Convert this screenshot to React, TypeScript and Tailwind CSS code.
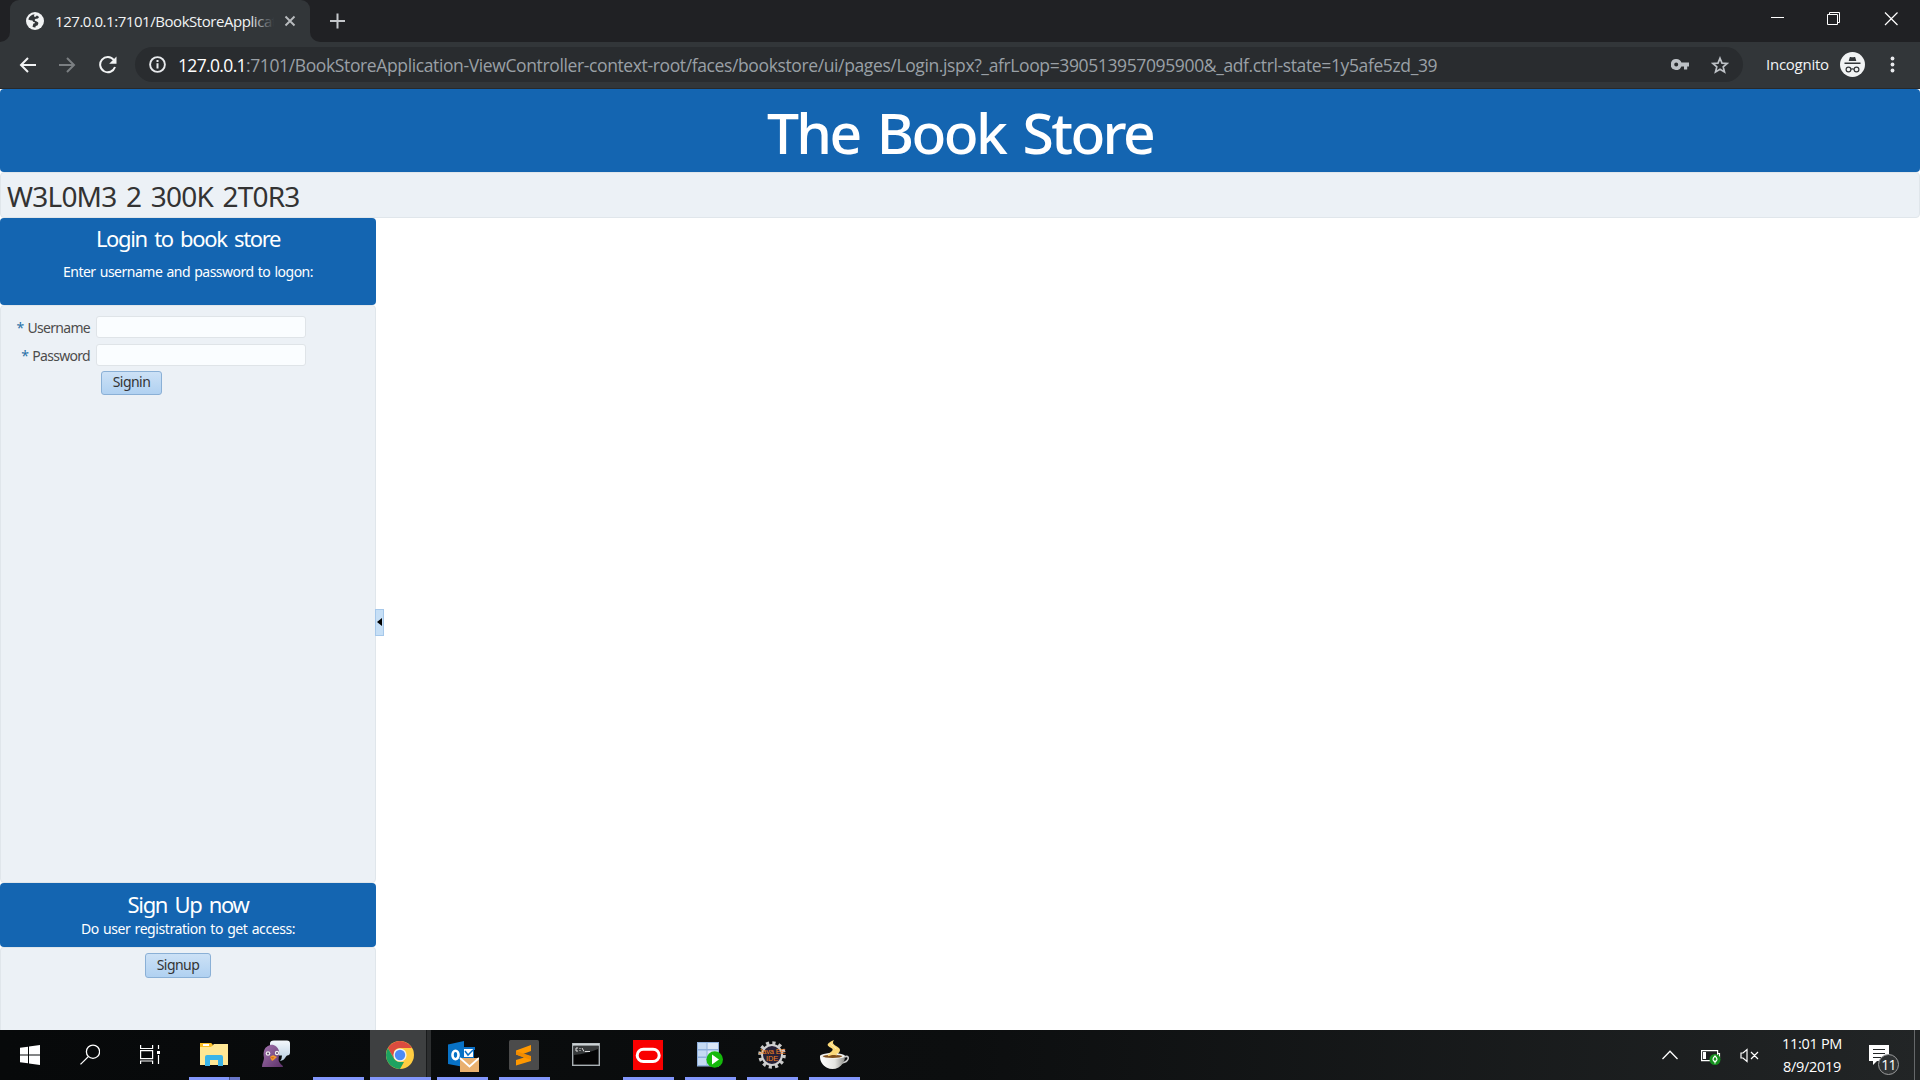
import type { ReactNode } from "react";

/* ---------- Browser chrome ---------- */

function GlobeIcon() {
  return (
    <svg width="18" height="18" viewBox="0 0 18 18">
      <circle cx="9" cy="9" r="9" fill="#f1f3f4" />
      <path
        d="M8.600 2.200C5.400 2.400 3 4.700 2.300 7.500c1.500.6 2.700 1 4.200 1 .4 1 .7 1.500 2.300 1.700.5.900-.4 1.300-1.400 1.400L6.500 14.800c.8.600 1.800.9 3 .8-.3-1.300.7-1.900 1.900-2 .6-1.300 1.500-2.200.6-3.300C10.900 9 9.500 9.500 8.700 8.200c-.2-1 .8-1.600 2.400-1.500.8-.2 1.300-.6 1.900-1.500-.6-.9-1.200-1.200-2.200-1.700-.7.600-.8 1.200-1.700 1.300-1 0-1.500-.9-.5-2.600z"
        fill="#323639"
      />
    </svg>
  );
}

function TabStrip() {
  return (
    <div className="flex h-[42px] bg-[#202124]">
      <div className="flex w-[10px] items-end bg-[#323639]">
        <div className="h-[42px] w-full rounded-br-[10px] bg-[#202124]" />
      </div>
      <div className="flex w-[300px] shrink-0 bg-[#202124]">
        <div className="flex h-[42px] w-full items-center rounded-t-[9px] bg-[#323639] pl-4">
          <GlobeIcon />
          <div className="relative ml-[11px] w-[219px] overflow-hidden whitespace-nowrap text-[15px] leading-[20px] tracking-[-0.45px] text-[#f1f3f4]">
            127.0.0.1:7101/BookStoreApplicat
            <div className="absolute right-0 top-0 h-5 w-6 bg-linear-to-r from-transparent to-[#323639]" />
          </div>
          <svg className="ml-[10px]" width="12" height="12" viewBox="0 0 12 12">
            <path d="M1.500 1.500l9 9M10.500 1.500l-9 9" stroke="#b8bbbe" strokeWidth="1.900" />
          </svg>
        </div>
      </div>
      <div className="w-[10px] bg-[#323639]">
        <div className="h-[42px] w-full rounded-bl-[10px] bg-[#202124]" />
      </div>
      <svg className="ml-[10px] mt-[13px]" width="16" height="16" viewBox="0 0 16 16">
        <path d="M7.500 .5v15M0 8h15" stroke="#c4c7ca" strokeWidth="2" />
      </svg>
      <div className="ml-auto flex">
        <svg className="mt-[11px]" width="150" height="16" viewBox="1770 11 150 16" fill="none" stroke="#fff">
          <path d="M1771 17.500h13" />
          <path d="M1827.500 14.500h10v10h-10zM1829.500 14.500v-2h10v10h-2" />
          <path d="M1885 12.500l12.500 12.500M1897.500 12.500L1885 25" strokeWidth="1.200" />
        </svg>
      </div>
    </div>
  );
}

function Toolbar() {
  return (
    <div className="flex h-[47px] items-center border-b border-[#27292b] bg-[#323639] pb-px">
      <svg className="ml-[19px]" width="17" height="16" viewBox="0 0 17 16" fill="none" stroke="#f1f3f4" strokeWidth="2">
        <path d="M17 8H2M9 1L2 8l7 7" />
      </svg>
      <svg className="ml-[23px]" width="17" height="16" viewBox="0 0 17 16" fill="none" stroke="#7b7f82" strokeWidth="2">
        <path d="M0 8h15M8 1l7 7-7 7" />
      </svg>
      <svg className="ml-[23px]" width="18" height="18" viewBox="0 0 18 18">
        <path d="M14.800 4A7.600 7.600 0 1 0 16 11" fill="none" stroke="#f1f3f4" strokeWidth="2" />
        <path d="M17.500 .5v7.300h-7.300z" fill="#f1f3f4" />
      </svg>
      <div className="ml-[18px] flex h-[35px] w-[1608px] items-center rounded-full bg-[#292c2f] pl-[14px]">
        <svg width="17" height="17" viewBox="0 0 17 17">
          <circle cx="8.500" cy="8.500" r="7.400" fill="none" stroke="#e8eaed" strokeWidth="1.900" />
          <path d="M8.500 7.300v5.200M8.500 4v2" stroke="#e8eaed" strokeWidth="2" />
        </svg>
        <span className="ml-3 whitespace-nowrap text-[17.500px] leading-6 tracking-[-0.376px] text-[#9aa0a6]">
          <span className="tracking-[-0.65px] text-white">127.0.0.1</span>
          :7101/BookStoreApplication-ViewController-context-root/faces/bookstore/ui/pages/Login.jspx?_afrLoop=390513957095900&amp;_adf.ctrl-state=1y5afe5zd_39
        </span>
        <svg className="ml-auto" width="18" height="11" viewBox="0 0 18 11">
          <path
            fillRule="evenodd"
            d="M5.500 0a5.500 5.500 0 1 0 4.900 7.500H13V10.500h3.200V7.500H18V3.600H10.400A5.500 5.500 0 0 0 5.500 0zM5.200 3.400a2 2 0 1 1 0 4 2 2 0 0 1 0-4z"
            fill="#bdc1c6"
          />
        </svg>
        <svg className="ml-[22px] mr-[14px]" width="18" height="18" viewBox="0 0 18 18">
          <path
            d="M9 2.200l2 4.900 5.200.4-4 3.400 1.300 5.100L9 13.300 4.500 16l1.300-5.100-4-3.400 5.200-.4z"
            fill="none"
            stroke="#bdc1c6"
            strokeWidth="1.700"
          />
        </svg>
      </div>
      <span className="ml-[23px] w-[63px] whitespace-nowrap text-[15px] tracking-[-0.25px] text-[#f1f3f4]">Incognito</span>
      <svg className="ml-[11px]" width="25" height="25" viewBox="0 0 25 25">
        <circle cx="12.500" cy="12.500" r="12.500" fill="#f1f3f4" />
        <path d="M8.700 9l1-3.600c.2-.5.600-.5 1-.4 1.200.4 2.400.4 3.600 0 .4-.1.800-.1 1 .4l1 3.600zM4.500 10.600h16v1.300h-16z" fill="#323639" />
        <g fill="none" stroke="#323639" strokeWidth="1.200">
          <circle cx="8.500" cy="17.500" r="2.400" />
          <circle cx="16.500" cy="17.500" r="2.400" />
          <path d="M10.900 17.300q1.600-1 3.200 0" />
        </g>
      </svg>
      <svg className="ml-[25px]" width="5" height="17" viewBox="0 0 5 17" fill="#e8eaed">
        <circle cx="2.500" cy="2.500" r="1.900" />
        <circle cx="2.500" cy="8.500" r="1.900" />
        <circle cx="2.500" cy="14.500" r="1.900" />
      </svg>
    </div>
  );
}

/* ---------- Book store page ---------- */

function Field({ label, type }: { label: string; type: string }) {
  return (
    <label className="flex h-[28px] items-start">
      <span className="mr-[6px] w-[89px] whitespace-nowrap pt-[2px] text-right text-[14px] leading-5 tracking-[-0.7px] text-[#4c4c4c]">
        <span className="mr-1 text-[#2a72a8]">*</span>
        {label}
      </span>
      <input type={type} className="h-[22px] w-[210px] rounded-[3px] border border-[#dfe4e8] bg-[#fafdff] px-1 outline-none" />
    </label>
  );
}

const buttonClass =
  "block whitespace-nowrap rounded-[3px] border border-[#8ab0d6] bg-linear-to-b from-[#cce1f6] to-[#b0d1f1] pb-[2px] text-center text-[14px] leading-[20px] tracking-[-0.55px] text-[#333]";

const headingClass = "text-[22px] leading-[30px] tracking-[-1.35px] [word-spacing:3px]";

function Sidebar() {
  return (
    <aside className="flex w-[376px] shrink-0 flex-col bg-white">
      <div className="h-[87px] rounded-[4px] bg-[#1465b1] text-center text-white">
        <h2 className={`${headingClass} pt-[5px]`}>Login to book store</h2>
        <p className="pt-[9px] text-[14px] leading-5 tracking-[-0.5px] [word-spacing:1px]">
          Enter username and password to logon:
        </p>
      </div>
      <div className="h-[578px] rounded-[4px] border border-[#e0e6eb] bg-[#ecf1f6] pt-[10px]">
        <Field label="Username" type="text" />
        <Field label="Password" type="password" />
        <button className={`${buttonClass} ml-[100px] -mt-px h-[24px] w-[61px]`}>Signin</button>
      </div>
      <div className="h-[64px] rounded-[4px] bg-[#1465b1] text-center text-white">
        <h2 className={`${headingClass} pt-[6px]`}>Sign Up now</h2>
        <p className="pt-px text-[14px] leading-[18px] tracking-[-0.42px] [word-spacing:1px]">
          Do user registration to get access:
        </p>
      </div>
      <div className="flex-1 rounded-t-[4px] border border-b-0 border-[#e0e6eb] bg-[#ecf1f6] pt-[5px]">
        <button className={`${buttonClass} ml-[144px] h-[25px] w-[66px]`}>Signup</button>
      </div>
    </aside>
  );
}

function StorePage() {
  return (
    <main className="flex min-h-0 flex-1 flex-col bg-white font-['Noto_Sans',sans-serif]">
      <header className="h-[83px] rounded-[4px] bg-[#1465b1] text-center">
        <h1 className="pt-[3px] text-[57px] font-medium leading-[80px] tracking-[-2.6px] text-white [word-spacing:5px]">
          The Book Store
        </h1>
      </header>
      <div className="h-[46px] rounded-[4px] border border-[#e0e6eb] bg-[#ecf1f6] pl-[6px] text-[28px] leading-[46px] tracking-[-0.78px] text-[#333] [word-spacing:3px]">
        W3L0M3 2 300K 2T0R3
      </div>
      <div className="flex min-h-0 flex-1">
        <Sidebar />
        <div className="relative flex-1 bg-white">
          <button className="absolute -left-px top-[391px] flex h-[27px] w-[9px] items-center justify-start border border-[#a6c8ea] bg-[#c6dff6] pb-px">
            <svg width="6" height="8" viewBox="0 0 6 8">
              <path d="M6 0v8L1 4z" fill="#000" />
            </svg>
          </button>
        </div>
      </div>
    </main>
  );
}

/* ---------- Taskbar ---------- */

function Task({ children, running = true }: { children?: ReactNode; running?: boolean }) {
  return (
    <div className="flex w-[62px] flex-col pl-[5px]">
      <div className="flex h-[47px] w-[50px] items-start justify-center pt-[10px]">{children}</div>
      {running && <div className="h-[3px] w-[51px] bg-[#8296fb]" />}
    </div>
  );
}

function FolderIcon() {
  return (
    <svg width="30" height="30" viewBox="0 0 30 30">
      <path d="M1 4q0-1 1-1h10l2 3v2H1z" fill="#f8b921" />
      <path d="M1 6h12l2-2h14v21H1z" fill="#ffe794" />
      <path d="M1 3h11l2 2-2 2H1z" fill="#fbbf25" />
      <path d="M4 4h6v2H4z" fill="#fff" />
      <path d="M6 26V17q0-2 2-2h14q2 0 2 2v9h-5v-6h-8v6z" fill="#3bb4e8" />
    </svg>
  );
}

function PidginIcon() {
  return (
    <svg width="30" height="30" viewBox="0 0 30 30">
      <defs>
        <linearGradient id="bubble" x2="0" y2="1">
          <stop stopColor="#f4f8fd" />
          <stop offset="1" stopColor="#b9cfe3" />
        </linearGradient>
        <linearGradient id="bird" x2="1" y2="1">
          <stop stopColor="#a273ae" />
          <stop offset="1" stopColor="#5d3269" />
        </linearGradient>
      </defs>
      <path d="M13 .5h13q3 0 3 3v9q0 3-3 3l-1 1q-2 4-6 4.500 2-2 2-5.500H9v-12q0-3 4-3z" fill="url(#bubble)" />
      <path d="M9 5c4-1 8 2 9 6 1 5-2 9 1 12 1 2 3 2 3 4H1c0-4 2-6 2-9 0-2-1-3 0-7 1-4 4-5 6-6z" fill="url(#bird)" />
      <circle cx="7" cy="13.500" r="2.300" fill="#eee" />
      <circle cx="7" cy="13.500" r="1.100" fill="#654a70" />
      <circle cx="16" cy="13" r="2.200" fill="#eee" />
      <circle cx="16" cy="13" r="1" fill="#654a70" />
      <path d="M9 17q3-3 5-1l2 1q-3 3-5 4-1-2-2-4z" fill="#f29a2e" />
      <path d="M9 17h4l-1 2z" fill="#d96a20" />
    </svg>
  );
}

function ChromeIcon() {
  return (
    <svg width="28" height="28" viewBox="-14 -14 28 28">
      <circle r="14" fill="#ffcd41" />
      <path d="M-12.120-7A14 14 0 0 1 12.120-7H0A7 7 0 0 0-6.060-3.500L-6.060 3.500z" fill="#dc4c3f" />
      <path d="M-12.120-7L-6.060 3.500A7 7 0 0 0 0 7h4L0 14A14 14 0 0 1-12.120-7z" fill="#1da261" />
      <circle r="6.600" fill="#f1f1f1" />
      <circle r="5.200" fill="#4c8bf5" />
    </svg>
  );
}

function OutlookIcon() {
  return (
    <svg className="ml-[2px]" width="32" height="32" viewBox="0 0 32 32">
      <path d="M15 7h13v3h-1v12h-12" fill="#0a70c7" />
      <path d="M17 9h9v8h-9z" fill="#fff" />
      <path d="M18 11l3 4 5-5" stroke="#0a70c7" strokeWidth="1.500" fill="none" />
      <path d="M1 4.500L17 1v26L1 24z" fill="#0872c6" />
      <ellipse cx="8.500" cy="15" rx="3" ry="4.200" fill="none" stroke="#fff" strokeWidth="2.600" />
      <path d="M13 18h19v14H13z" fill="#e9b06f" />
      <path d="M13 18l9.500 8.500L32 18" fill="none" stroke="#fff" strokeWidth="1.800" />
    </svg>
  );
}

function SublimeIcon() {
  return (
    <svg width="30" height="30" viewBox="0 0 30 30">
      <rect width="30" height="30" rx="1.500" fill="#4b4b4b" />
      <path d="M7 10.500L22 5v6L14 14l8 2.500v4.500L7 25.500V20l8-2.500-8-3z" fill="#ff9800" />
      <path d="M7 14.500V11l15 5v4z" fill="#f28c00" />
    </svg>
  );
}

function TerminalIcon() {
  return (
    <svg width="28" height="30" viewBox="0 0 28 30">
      <rect x=".7" y="3.700" width="26.600" height="21.600" fill="#050505" stroke="#a9b0b3" strokeWidth="1.400" />
      <path d="M1 3.500h26v2.200H1z" fill="#cbd2d5" />
      <path d="M2 15q12-1 24-6V6H2z" fill="#36393a" />
      <path d="M6 8H4v3h2M8 8v1M8 10v1M10 8l2 3.500M13 11.500h5" fill="none" stroke="#ddd" />
    </svg>
  );
}

function OracleIcon() {
  return (
    <svg width="30" height="30" viewBox="0 0 30 30">
      <path d="M0 0h30v30H0z" fill="#f90000" />
      <rect x="4.200" y="9.200" width="22" height="12.400" rx="6.200" fill="none" stroke="#fff" strokeWidth="3" />
    </svg>
  );
}

function DatabaseRunIcon() {
  return (
    <svg width="30" height="30" viewBox="0 0 30 30">
      <rect x="2" y="2" width="22" height="24.500" fill="#8fb0dc" />
      <path d="M3 3h8.500v6H3zM3 10.500h8.500v6H3zM3 18h8.500v7H3z" fill="#c5daf3" />
      <path d="M12.500 3H23v6H12.500zM12.500 10.500H23v6H12.500zM12.500 18H23v7H12.500z" fill="#dbe8f8" />
      <circle cx="19.700" cy="19.500" r="8.300" fill="#15b90b" />
      <path d="M17 14.500v10l7-5z" fill="#fff" />
    </svg>
  );
}

function EclipseIcon() {
  return (
    <div className="relative h-[30px] w-[28px]">
      <svg width="28" height="30" viewBox="0 0 28 30">
        <circle cx="14" cy="15" r="12" fill="none" stroke="#c9c9c9" strokeWidth="3.600" strokeDasharray="3.140 3.140" />
        <circle cx="14" cy="15" r="10" fill="#272137" stroke="#d0d0d0" strokeWidth="2" />
      </svg>
      <div className="absolute inset-x-[-4px] top-[8px] whitespace-nowrap text-center font-['Liberation_Sans'] text-[7.500px] leading-[7px] tracking-[-0.2px] text-[#f58220]">
        <div>Java EE</div>
        <div>IDE</div>
      </div>
    </div>
  );
}

function CoffeeIcon() {
  return (
    <svg width="30" height="30" viewBox="0 0 30 30">
      <defs>
        <linearGradient id="cup" x2="1">
          <stop stopColor="#fff" />
          <stop offset=".6" stopColor="#e4e4e0" />
          <stop offset="1" stopColor="#8c8c88" />
        </linearGradient>
      </defs>
      <path d="M15 0C5 4.500 9 6 13 8.500c2 1.500-1 3.500-5 6h10c4-3.500 4-5.500 0-8-4-2-5-3.500-3-6.500z" fill="#fbd978" />
      <path d="M12 3c-1 2 4 3 5 6" fill="none" stroke="#fff3c4" />
      <path d="M25 17q5-2 4 2-1 3-6 4" fill="none" stroke="#ccc" strokeWidth="1.700" />
      <path d="M1 16h25c0 6-3 9-6.500 11.500-4 2-8 2-12 0C3.500 25 1 22 1 16z" fill="url(#cup)" />
      <ellipse cx="13.500" cy="16" rx="12.500" ry="3" fill="#f2f2ef" />
      <ellipse cx="13.500" cy="16.300" rx="9.800" ry="1.600" fill="#80501c" />
      <path d="M9 15.500q5-3 9-1" stroke="#fbd978" strokeWidth="2" fill="none" />
    </svg>
  );
}

function Taskbar() {
  return (
    <footer className="flex h-[50px] shrink-0 bg-linear-to-r from-[#07090a] via-[#0c0e0f] to-[#222526] text-white">
      <div className="flex w-[184px] pl-5 pt-[14px]">
        <svg className="mt-px" width="20" height="20" viewBox="0 0 20 20" fill="#fff">
          <path d="M0 2.800L8 1.700V9.400H0zM9 1.500L20 0v9.400H9zM0 10.500h8v7.800L0 17.200zM9 10.500h11V20L9 18.500z" />
        </svg>
        <svg className="ml-10" width="20" height="21" viewBox="0 0 20 21" fill="none" stroke="#fff" strokeWidth="1.300">
          <circle cx="13" cy="7.700" r="6.600" />
          <path d="M8.300 12.600L.5 20.400" />
        </svg>
        <svg className="ml-10" width="20" height="20" viewBox="0 0 20 20" fill="none" stroke="#fff" strokeWidth="1.200">
          <path d="M.6 1v3.500h12V1M.6 6.600h12v8H.6zM.6 20v-3h12v3M18.500 1v4M18.500 11v9" />
          <path d="M17 7h3v3h-3z" fill="#fff" stroke="none" />
        </svg>
      </div>
      <div className="flex w-[62px] flex-col pl-[5px]">
        <div className="flex h-[47px] w-[50px] justify-center pt-[10px]"><FolderIcon /></div>
        <div className="flex h-[3px] w-[51px]">
          <div className="w-[40px] bg-[#8296fb]" />
          <div className="flex-1 border-l border-[#46518d] bg-[#6876c8]" />
        </div>
      </div>
      <Task running={false}><PidginIcon /></Task>
      <Task />
      <div className="flex w-[62px] flex-col">
        <div className="flex h-[47px]">
          <div className="flex w-[56px] justify-center bg-[#3e4041] pl-[3px] pt-[11px]"><ChromeIcon /></div>
          <div className="w-[5px] border-l border-[#191b1c] bg-[#2c2e2f]" />
        </div>
        <div className="h-[3px] w-[61px] bg-[#8296fb]" />
      </div>
      <Task><OutlookIcon /></Task>
      <Task><SublimeIcon /></Task>
      <Task running={false}><TerminalIcon /></Task>
      <Task><OracleIcon /></Task>
      <Task><DatabaseRunIcon /></Task>
      <Task><EclipseIcon /></Task>
      <Task><CoffeeIcon /></Task>
      <div className="ml-auto flex">
        <svg className="mt-[20px]" width="16" height="10" viewBox="0 0 16 10">
          <path d="M.5 9L8 1.200 15.500 9" fill="none" stroke="#fff" strokeWidth="1.300" />
        </svg>
        <svg className="ml-[23px] mt-[19px]" width="20" height="17" viewBox="0 0 20 17">
          <path d="M.6 1.600h16v10H.6zM17 4.500h1.500v4H17" fill="none" stroke="#fff" strokeWidth="1.200" />
          <path d="M2 3h3v7H2z" fill="#fff" />
          <circle cx="14" cy="10.500" r="5.500" fill="#16921f" />
          <path d="M14 14.500v-3M14 7q4 3.500 0 6-4-2.500 0-6z" fill="none" stroke="#fff" strokeWidth="1.200" />
        </svg>
        <svg className="ml-[19px] mt-[18px]" width="19" height="15" viewBox="0 0 19 15" fill="none" stroke="#fff" strokeWidth="1.200">
          <path d="M1 5h2l4-3.500v12L3 10H1zM11 4l7 7M18 4l-7 7" />
        </svg>
        <div className="ml-[20px] w-[66px] whitespace-nowrap pt-[2px] text-center text-[14.500px] leading-[23px] tracking-[-0.3px]">
          <div>11:01 PM</div>
          <div>8/9/2019</div>
        </div>
        <div className="relative ml-[23px] mt-[15px] h-[30px] w-[32px]">
          <svg width="22" height="20" viewBox="0 0 22 20">
            <path d="M1 0h20v16H9l-4 4v-4H1z" fill="#fff" />
            <path d="M5 4.500h12M5 8.500h12M5 12.500h8" stroke="#222526" strokeWidth="1.100" />
          </svg>
          <div className="absolute left-[10px] top-[9px] flex size-[21px] items-center justify-center rounded-full border border-[#9b9c9d] bg-[#303334] text-[14px] font-medium tracking-[-0.8px]">
            11
          </div>
        </div>
        <div className="ml-[14px] h-[50px] w-[6px] border-l border-[#65686a]" />
      </div>
    </footer>
  );
}

export default function App() {
  return (
    <div className="flex h-[1080px] w-[1920px] flex-col overflow-hidden bg-white font-['Open_Sans',sans-serif]">
      <TabStrip />
      <Toolbar />
      <StorePage />
      <Taskbar />
    </div>
  );
}
